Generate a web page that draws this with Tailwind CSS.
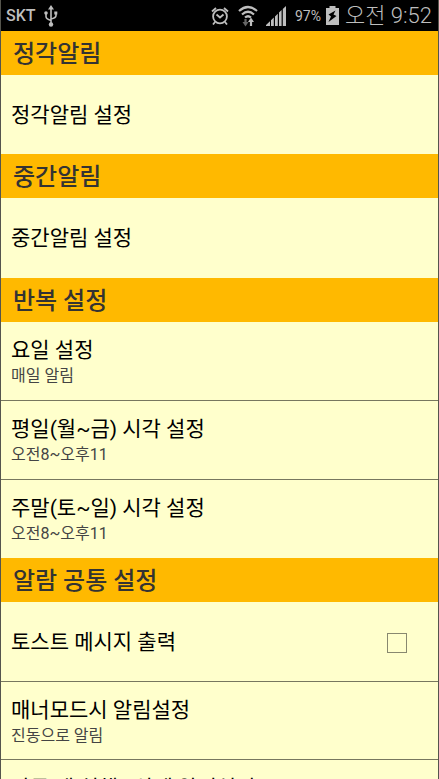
<!DOCTYPE html>
<html lang="ko">
<head>
  <meta charset="UTF-8" />
  <meta name="viewport" content="width=device-width, initial-scale=1" />
  <title>알림 설정</title>
  <script src="https://cdn.jsdelivr.net/npm/@tailwindcss/browser@4"></script>
</head>
<body class="h-screen bg-[#ffffcc] text-black font-[Roboto,'Noto_Sans_CJK_KR',sans-serif]">
  <div class="h-full flex flex-col border-x border-[#55554d]">
    <!-- status bar -->
    <header class="h-[31px] shrink-0 bg-black text-[#bebebe] flex items-center pl-[5px] pr-[6px]">
      <span class="text-base font-medium">SKT</span>
      <svg class="ml-2 w-[14px] h-[22px]" viewBox="0 0 14 22" fill="none" stroke="#bebebe" stroke-width="1.6">
        <path d="M7 3v16M2 8v3.500Q2 14 7 15.500M12 8v2.500Q12 13 7 14" />
        <path d="M7 0l3 4.500h-6zM10.300 6.500h3v3h-3z" fill="#bebebe" stroke="none" />
        <circle cx="2" cy="8" r="1.800" fill="#bebebe" stroke="none" />
        <circle cx="7" cy="19.500" r="2.200" fill="#bebebe" stroke="none" />
      </svg>
      <div class="ml-auto flex items-center">
        <svg class="w-[18px] h-[18px]" viewBox="0 0 18 18" fill="none" stroke="#bebebe" stroke-width="1.8">
          <circle cx="9" cy="9.500" r="6.900" />
          <path d="M1 4.500L5 1M17 4.500L13 1M5.500 7.500L9 10.500l3.500-3M4 15l-2 2.500M14 15l2 2.500" />
        </svg>
        <svg class="ml-[9px] w-[20px] h-[22px]" viewBox="0 0 20 22" fill="none" stroke="#bebebe" stroke-width="2.200">
          <path d="M1 6Q10-2 19 6M4 9.500Q10 4 16 9.500M7 12.500Q10 10 13 12.500" />
          <path d="M13 21v-5" />
          <path d="M13 12.500l3 4.500h-6z" fill="#bebebe" stroke="none" />
          <path d="M7.500 14v4" stroke="#666" />
          <path d="M7.500 21.500l3-4.500h-6z" fill="#666" stroke="none" />
        </svg>
        <svg class="ml-[8px] w-[20px] h-[20px]" viewBox="0 0 20 20" fill="#bebebe">
          <path d="M0 20v-1l4-3.800V20zM5 20v-5.800l2.800-2.700V20zM9 20v-9.600l2.800-2.700V20zM13 20V6.500l2.600-2.500v16zM16.800 20V3L20 0v20z" />
        </svg>
        <span class="ml-[9px] text-sm">97%</span>
        <svg class="ml-[5px] w-[13px] h-[19px]" viewBox="0 0 13 19">
          <path d="M3.500 0h6v2H13v17H0V2h3.500z" fill="#bebebe" />
          <path d="M9.500 4.500L2.500 8.500l2.500 2-2.500 5.500 8-6-3-1.500z" fill="#000" />
        </svg>
        <span class="ml-[6px] text-[22px] leading-none font-light">오전 9:52</span>
      </div>
    </header>

    <main class="flex-1 min-h-0 overflow-y-auto [scrollbar-width:none]">
      <h2 class="h-[44px] bg-[#ffb900] text-[#333] px-3 pt-[2px] flex items-center text-2xl font-medium">정각알림</h2>
      <div class="h-[79px] px-[10px] pt-[2px] flex items-center text-[21px]">정각알림 설정</div>

      <h2 class="h-[44px] bg-[#ffb900] text-[#333] px-3 pt-[2px] flex items-center text-2xl font-medium">중간알림</h2>
      <div class="h-[80px] px-[10px] pt-[2px] flex items-center text-[21px]">중간알림 설정</div>

      <h2 class="h-[44px] bg-[#ffb900] text-[#333] px-3 pt-[2px] flex items-center text-2xl font-medium">반복 설정</h2>
      <ul class="divide-y divide-[#77775f]">
        <li class="h-[79px] px-[10px] pt-[14px]">
          <p class="text-[21px] leading-7">요일 설정</p>
          <p class="text-base text-[#444]">매일 알림</p>
        </li>
        <li class="h-[79px] px-[10px] pt-[14px]">
          <p class="text-[21px] leading-7">평일(월~금) 시각 설정</p>
          <p class="text-base text-[#444]">오전8~오후11</p>
        </li>
        <li class="h-[78px] px-[10px] pt-[14px]">
          <p class="text-[21px] leading-7">주말(토~일) 시각 설정</p>
          <p class="text-base text-[#444]">오전8~오후11</p>
        </li>
      </ul>

      <h2 class="h-[44px] bg-[#ffb900] text-[#333] px-3 pt-[2px] flex items-center text-2xl font-medium">알람 공통 설정</h2>
      <ul class="divide-y divide-[#77775f]">
        <li class="h-[80px] pl-[10px] pr-[31px] pt-[2px] flex items-center justify-between">
          <label for="toast" class="text-[21px]">토스트 메시지 출력</label>
          <input id="toast" type="checkbox" class="appearance-none w-5 h-5 border border-[#88886f]" />
        </li>
        <li class="h-[78px] px-[10px] pt-[14px]">
          <p class="text-[21px] leading-7">매너모드시 알림설정</p>
          <p class="text-base text-[#444]">진동으로 알림</p>
        </li>
        <li class="h-[79px] px-[10px] pt-[14px]">
          <p class="text-[21px] leading-7">다른 앱 실행 - 상세 알림설정</p>
        </li>
      </ul>
    </main>
  </div>
</body>
</html>
